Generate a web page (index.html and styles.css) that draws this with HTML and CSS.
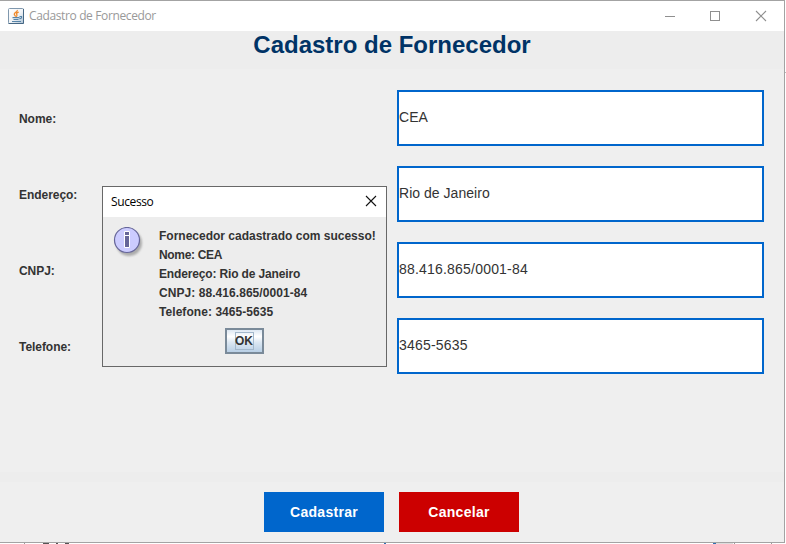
FILE: index.html
```html
<!DOCTYPE html>
<html lang="pt-BR">
<head>
<meta charset="utf-8">
<title>Cadastro de Fornecedor</title>
<link rel="stylesheet" href="styles.css">
</head>
<body>
<div class="desktop">
  <main class="window">
    <header class="titlebar">
      <svg class="java" width="16" height="16" viewBox="0 0 16 16">
        <defs><linearGradient id="tile" x1="0" y1="0" x2="1" y2="1"><stop offset="0" stop-color="#fff"/><stop offset=".55" stop-color="#f0f3f6"/><stop offset="1" stop-color="#a9bfd2"/></linearGradient></defs>
        <rect x=".5" y=".5" width="15" height="15" rx="1" fill="url(#tile)" stroke="#8098ae"/>
        <path d="M.5 15.5h15V1" fill="none" stroke="#456784"/>
        <path d="M9.300 2C9.800 4 6 4.500 6.300 6.300C6.500 7.300 7.600 7.600 7.500 8.800M10.700 4.200C8.500 4.800 8 5.600 8.800 6.500C9.400 7.300 8.900 8 8.300 8.800" fill="none" stroke="#f08a2c" stroke-width="1.300"/>
        <path d="M4.500 9.700h7M5.500 11.500h5M11.500 8.500h2v1.500l-2 1M4 13.500h9" fill="none" stroke="#5684a8" stroke-width="1.200"/>
      </svg>
      <span class="caption">Cadastro de Fornecedor</span>
      <svg class="controls" width="104" height="12" viewBox="0 0 104 12" fill="none" stroke="#8f8f8f">
        <path d="M1 6.500h10M46.500 1.500h9v9h-9z" shape-rendering="crispEdges"/>
        <path d="M92 1l10 10M102 1L92 11" stroke-width="1.100"/>
      </svg>
    </header>
    <h1 class="heading">Cadastro de Fornecedor</h1>
    <form class="form">
      <label for="nome">Nome:</label><input id="nome" class="words" value="CEA">
      <label for="endereco">Endereço:</label><input id="endereco" class="words" value="Rio de Janeiro">
      <label for="cnpj">CNPJ:</label><input id="cnpj" value="88.416.865/0001-84">
      <label for="telefone">Telefone:</label><input id="telefone" value="3465-5635">
    </form>
    <div class="divider"></div>
    <footer class="actions">
      <button class="action save">Cadastrar</button>
      <button class="action cancel">Cancelar</button>
    </footer>
  </main>
  <svg class="below" width="786" height="1" viewBox="0 0 786 1" shape-rendering="crispEdges">
    <path d="M24 0h1v1h-1zM734 0h1v1h-1zM771 0h1v1h-1z" fill="#999"/>
    <path d="M43 0h6v1h-6zM56 0h2v1h-2zM65 0h4v1h-4z" fill="#555"/>
    <path d="M384 0h2v1h-2zM713 0h3v1h-3z" fill="#2f72b5"/>
    <path d="M716 0h17v1h-17z" fill="#ddd"/>
  </svg>
  <div class="edge"></div>
  <section class="dialog" role="dialog" aria-label="Sucesso">
    <header class="dialog-bar">
      <span class="dialog-title">Sucesso</span>
      <svg width="12" height="12" viewBox="0 0 12 12" stroke="#111" stroke-width="1.100"><path d="M1 1l10 10M11 1L1 11"/></svg>
    </header>
    <div class="message">
      <svg class="info" width="32" height="32" viewBox="0 0 32 32">
        <defs><filter id="blur"><feGaussianBlur stdDeviation="1.300"/></filter></defs>
        <circle cx="16" cy="16" r="13" fill="#777" opacity=".55" filter="url(#blur)"/>
        <circle cx="14" cy="13" r="12.500" fill="#ccf" stroke="#669" stroke-width="1.200"/>
        <path d="M11.500 4.500h5v4h-5zM11.500 8.500h5v12h-5z" fill="#669" stroke="#fff"/>
      </svg>
      <div class="lines">
        <p>Fornecedor cadastrado com sucesso!</p>
        <p class="tight">Nome: CEA</p>
        <p class="narrow">Endereço: Rio de Janeiro</p>
        <p class="digits">CNPJ: 88.416.865/0001-84</p>
        <p class="digits">Telefone: 3465-5635</p>
      </div>
    </div>
    <button class="ok"><span class="ok-focus">OK</span></button>
  </section>
</div>
</body>
</html>
```
FILE: styles.css
```css
* { box-sizing: border-box; }
body { margin: 0; overflow: hidden; font-family: "Liberation Sans", Arial, sans-serif; color: #333; }
.desktop { position: relative; width: 786px; height: 544px; background: #fff; }
.window { display: flex; flex-direction: column; width: 785px; height: 543px; background: #efefef; border: solid #a3a3a3; border-width: 1px 1px 1px 0; }
.titlebar { display: flex; align-items: center; height: 30px; padding: 0 16px 0 8px; background: #fff; }
.caption { margin: -2px 0 0 5px; font: 12px "Open Sans", sans-serif; letter-spacing: -.37px; color: #999; }
.controls { margin-left: auto; margin-top: -1px; }
.heading { display: flex; justify-content: center; height: 38px; margin: 0; background: #ededed; color: #036; font-size: 24px; line-height: 28px; letter-spacing: 0; }
.form { display: grid; grid-template-columns: 367px 367px; grid-template-rows: repeat(4, 56px); gap: 20px 10px; align-items: center; align-content: start; height: 403px; padding: 21px 20px 0; }
label { margin-left: -1px; padding-top: 2px; font-size: 12px; font-weight: bold; letter-spacing: -.05px; }
input { width: 367px; height: 56px; margin: 0; padding: 0 0 2px; border: 2px solid #06c; border-radius: 0; outline: 0; background: #fff; color: #333; font: 14px "Liberation Sans", Arial, sans-serif; letter-spacing: .2px; }
.words { letter-spacing: .03px; }
.divider { height: 10px; background: #ededed; }
.actions { display: flex; justify-content: center; gap: 15px; height: 60px; padding: 10px 1px 10px 0; }
.action { width: 120px; height: 40px; padding: 0; border: 0; color: #fff; font: bold 14px "Liberation Sans", Arial, sans-serif; letter-spacing: .28px; }
.save { background: #06c; }
.cancel { background: #c00; }
.below { display: block; }
.edge { position: absolute; right: 0; top: 72px; width: 1px; height: 1px; background: #bbb; }
.dialog { position: absolute; left: 102px; top: 186px; width: 285px; height: 181px; border: 1px solid #686868; background: #ededed; }
.dialog-bar { display: flex; align-items: center; justify-content: space-between; height: 30px; padding: 0 9px 2px 8px; background: #fff; }
.dialog-title { padding-top: 1px; font: 12px "Open Sans", sans-serif; letter-spacing: -.38px; color: #000; }
.message { display: flex; gap: 14px; height: 111px; padding: 10px 0 0 10px; }
.info { flex: none; }
.lines { white-space: nowrap; font-size: 12px; font-weight: bold; line-height: 19px; }
.lines p { margin: 0; }
.tight { letter-spacing: -.33px; }
.narrow { letter-spacing: -.15px; }
.digits { letter-spacing: .06px; }
.ok { display: flex; align-items: center; justify-content: center; width: 39px; height: 26px; margin-left: 122px; padding: 0; border: 2px solid #7a8a99; background: linear-gradient(#dde8f3 0%, #fff 30%, #dde8f3 55%, #b8cfe5 100%); font: bold 12px "Liberation Sans", Arial, sans-serif; color: #333; }
.ok-focus { display: block; width: 19px; height: 18px; border: 1px solid #a3b8cc; line-height: 17px; text-indent: -1px; }
```
